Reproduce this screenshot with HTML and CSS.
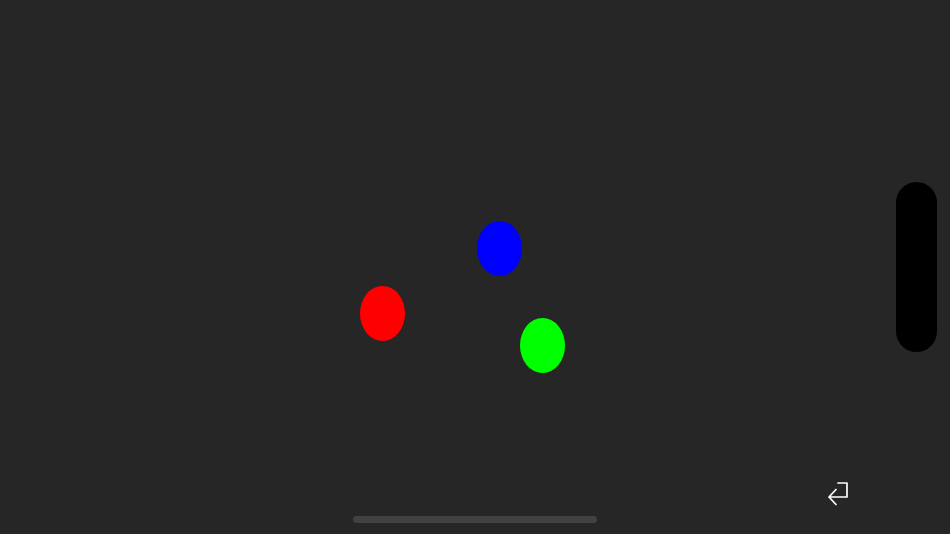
FILE: index.html
```
<!DOCTYPE html>
<html>
<head>
<meta charset="utf-8">
<link rel="stylesheet" href="styles.css">
</head>
<body>
<div class="stage">
  <div class="ball ball-red"></div>
  <div class="ball ball-blue"></div>
  <div class="ball ball-green"></div>
  <div class="pill"></div>
  <svg class="return-icon" width="26" height="30" viewBox="0 0 26 30">
    <path d="M13 4 H22 V18 H4 M11 10.5 L4 18 L11 25.5" fill="none" stroke="#ffffff" stroke-width="1.7" stroke-linecap="round" stroke-linejoin="round"/>
  </svg>
  <div class="home-indicator"></div>
</div>
</body>
</html>
```
FILE: styles.css
```
html, body {
  margin: 0;
  padding: 0;
  background: #262626;
}
.stage {
  position: relative;
  width: 950px;
  height: 534px;
  overflow: hidden;
  background: #262626;
}
.ball {
  position: absolute;
  width: 45px;
  height: 55px;
  border-radius: 50%;
}
.ball-red { left: 360px; top: 286px; background: #ff0000; }
.ball-blue { left: 477px; top: 221px; background: #0000ff; }
.ball-green { left: 520px; top: 318px; background: #00ff00; }
.pill {
  position: absolute;
  left: 896px;
  top: 182px;
  width: 41px;
  height: 170px;
  border-radius: 21px;
  background: #000000;
}
.return-icon {
  position: absolute;
  left: 825px;
  top: 479px;
}
.home-indicator {
  position: absolute;
  left: 353px;
  top: 516px;
  width: 244px;
  height: 7px;
  border-radius: 4px;
  background: #414141;
}
```
